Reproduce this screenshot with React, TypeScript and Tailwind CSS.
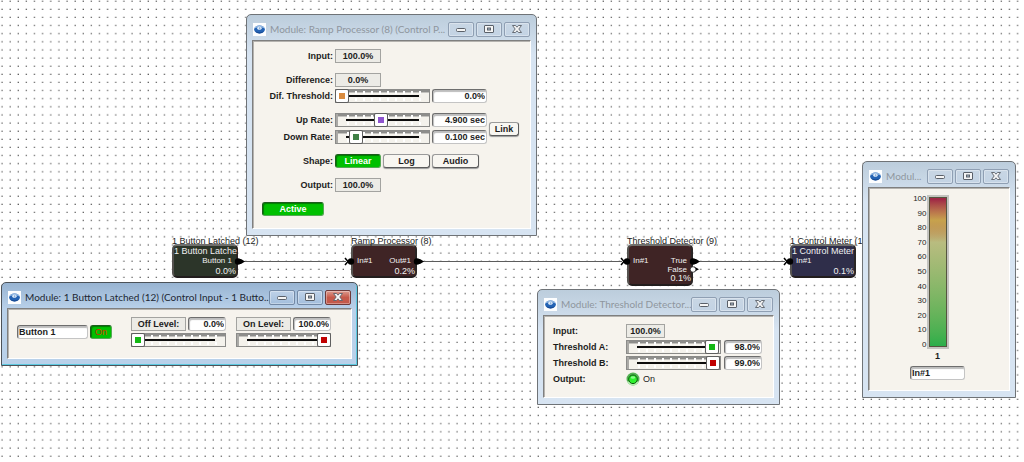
import type { ReactNode } from "react";
import clsx from "clsx";

type WindowProps = {
  title: string;
  active?: boolean;
  className: string;
  children: ReactNode;
};

type NodeProps = {
  name: string;
  className: string;
  children: ReactNode;
};

const BOX = "h-[14px] border border-[#a3a3a0] bg-[#ecebe6] leading-[13px] text-center";
const FIELD =
  "h-[14px] min-w-0 rounded-[3px] border border-[#c4c4c4] border-t-[#6e6e6e] border-l-[#6e6e6e] bg-white px-px text-right font-bold shadow-[inset_1px_2px_1px_#bdbdbd] outline-none";
const BUTTON =
  "h-[14px] rounded-[3px] border border-[#9a9a9a] border-r-[#5c5c5c] border-b-[#5c5c5c] bg-[#f8f6f1] text-center font-bold leading-[12px] shadow-[0_1px_1px_#999]";
const BUTTON_ON =
  "h-[14px] rounded-[3px] border border-[#55a855] border-t-[#1c5c1c] border-l-[#1c5c1c] bg-[#00c000] text-center font-bold leading-[12px] shadow-[inset_1px_1px_1px_#007a00]";

const TICKS = [11, 19, 27, 35, 43, 51, 59, 67, 75, 83];
const SCALE = [100, 90, 80, 70, 60, 50, 40, 30, 20, 10, 0];

function AppIcon() {
  return (
    <svg viewBox="0 0 13 13" className="size-[13px] shrink-0" aria-hidden="true">
      <rect width="13" height="13" fill="#fdfeff" />
      <ellipse cx="6.5" cy="6.5" rx="5.4" ry="3.9" fill="#2463b4" />
      <path d="M1.3 5.4a5.4 3.9 0 0 1 10.4 0q-1.2-1-5.2-1t-5.2 1z" fill="#8fb6e2" />
      <ellipse cx="6.4" cy="5.3" rx="2.2" ry="1.8" fill="#dbe8f6" />
      <path d="M6.2 4.2h1v2.4h-1z" fill="#7aa5d8" />
      <path d="M2 8.3q4.5 1.8 9 0-1.500 2.200-4.500 2.200T2 8.300z" fill="#174a94" />
    </svg>
  );
}

function CaptionButton({ kind, active }: { kind: "Minimize" | "Maximize" | "Close"; active?: boolean }) {
  return (
    <button
      type="button"
      aria-label={kind}
      className={clsx(
        "flex h-[15px] w-[26px] items-center justify-center rounded-[2px] border shadow-[inset_0_0_0_1px_#ffffff55]",
        active && kind === "Close"
          ? "border-[#6d3a3a] bg-linear-to-b from-[#dc9a8e] via-[#c6594a] to-[#c25a4c]"
          : active
            ? "border-[#7389a5] bg-linear-to-b from-[#bfd2e8] to-[#a3bedc]"
            : "border-[#8f9fb3] bg-linear-to-b from-[#c8d6e4] to-[#c3d3e4]",
      )}
    >
      <svg viewBox="0 0 12 10" className="h-[10px] w-[12px]" fill="#f5f5f5" stroke="#5a6069">
        {kind === "Minimize" && <rect x="1.5" y="4.5" width="9" height="3" rx="1" />}
        {kind === "Maximize" && (
          <>
            <rect x="1.5" y="1.5" width="9" height="7" rx="0.5" />
            <rect x="4.5" y="4" width="3" height="2" fill="#a9bacb" />
          </>
        )}
        {kind === "Close" && (
          <path
            d="M1.5 1.5h3L6 3.2l1.5-1.7h3L7.8 5l2.7 3.5h-3L6 6.8 4.500 8.500h-3L4.200 5z"
            strokeWidth="0.9"
          />
        )}
      </svg>
    </button>
  );
}

function ModuleWindow({ title, active, className, children }: WindowProps) {
  return (
    <section
      className={clsx(
        "absolute flex flex-col rounded-t-[5px] border px-[5px] pb-[6px] text-[9px] font-bold text-[#1c1c1c]",
        active
          ? "border-[#4c5258] bg-linear-to-b from-[#98b4d2] to-[#b9d1ea] to-[26px] shadow-[inset_-1px_-1px_0_#5cc9e0]"
          : "border-[#6f7377] bg-linear-to-b from-[#bccddc] to-[#d7e4f2] to-[40px]",
        className,
      )}
    >
      <header className="flex h-[25px] shrink-0 items-center gap-[4px] pt-[3px] pr-px pl-px">
        <AppIcon />
        <h2
          className={clsx(
            "min-w-0 flex-1 font-[Lato,sans-serif] text-[10px] font-normal whitespace-nowrap",
            active ? "text-[#1d2733]" : "text-[#8f969e]",
          )}
        >
          {title}
        </h2>
        <div className="flex gap-[2px]">
          <CaptionButton kind="Minimize" active={active} />
          <CaptionButton kind="Maximize" active={active} />
          <CaptionButton kind="Close" active={active} />
        </div>
      </header>
      <div className="flex-1 border border-t-[#7f7f7f] border-r-white border-b-white border-l-[#7f7f7f] bg-[#f6f3ed] shadow-[inset_1px_1px_0_#b5b3af]">
        {children}
      </div>
    </section>
  );
}

function Slider({ label, value, tone }: { label: string; value: number; tone: string }) {
  return (
    <div className="grid h-[14px] w-[95px] shrink-0 border border-[#8b8b89] bg-[#f4f2ec] *:[grid-area:1/1]">
      <svg viewBox="0 0 93 12" className="h-[12px] w-[93px]" aria-hidden="true">
        <path d="M0 0h93v2H0z" fill="#8d8d8b" />
        <path d="M0 2h93v1H0z" fill="#c3c2be" />
        <path d="M0 0h2v12H0z" fill="#aaa9a6" />
        {TICKS.map((x) => (
          <path key={x} d={`M${x} 1h2v3h-2zM${x} 8h2v3h-2z`} fill="#fff" />
        ))}
        <path d="M10 5h73v2H10z" fill="#0c0c0c" />
      </svg>
      <input
        type="range"
        aria-label={label}
        defaultValue={value}
        className={clsx(
          "h-[12px] w-[93px] appearance-none bg-transparent [&::-webkit-slider-thumb]:size-[12px] [&::-webkit-slider-thumb]:appearance-none [&::-webkit-slider-thumb]:rounded-[1px] [&::-webkit-slider-thumb]:border-3 [&::-webkit-slider-thumb]:border-white [&::-webkit-slider-thumb]:bg-current [&::-webkit-slider-thumb]:shadow-[0_0_0_1px_#5f5f5f]",
          tone,
        )}
      />
    </div>
  );
}

function Row({ label, children }: { label: string; children: ReactNode }) {
  return (
    <div className="flex h-[14px] items-center gap-[2px]">
      <span className="w-[80px] shrink-0 text-right leading-[14px]">{label}</span>
      {children}
    </div>
  );
}

function RampWindow() {
  return (
    <ModuleWindow
      title="Module: Ramp Processor (8) (Control P..."
      className="top-[14px] left-[246px] w-[291px]"
    >
      <div className="flex flex-col gap-[10px] pt-[8px] pb-[12px]">
        <Row label="Input:">
          <output className={`${BOX} w-[46px]`}>100.0%</output>
        </Row>
        <div className="flex flex-col gap-[2px]">
          <Row label="Difference:">
            <output className={`${BOX} w-[46px]`}>0.0%</output>
          </Row>
          <Row label="Dif. Threshold:">
            <Slider label="Dif. Threshold" value={0} tone="text-[#d98b3f]" />
            <input aria-label="Dif. Threshold value" defaultValue="0.0%" className={`${FIELD} w-[55px]`} />
          </Row>
        </div>
        <div className="flex items-center gap-[2px]">
          <div className="flex flex-col gap-[3px]">
            <Row label="Up Rate:">
              <Slider label="Up Rate" value={48} tone="text-[#8f55cf]" />
              <input aria-label="Up Rate value" defaultValue="4.900 sec" className={`${FIELD} w-[55px]`} />
            </Row>
            <Row label="Down Rate:">
              <Slider label="Down Rate" value={17} tone="text-[#3f8046]" />
              <input aria-label="Down Rate value" defaultValue="0.100 sec" className={`${FIELD} w-[55px]`} />
            </Row>
          </div>
          <button type="button" className={`${BUTTON} w-[30px]`}>
            Link
          </button>
        </div>
        <Row label="Shape:">
          <button type="button" aria-pressed="true" className={`${BUTTON_ON} w-[46px] text-white`}>
            Linear
          </button>
          <button type="button" className={`${BUTTON} w-[47px]`}>
            Log
          </button>
          <button type="button" className={`${BUTTON} w-[47px]`}>
            Audio
          </button>
        </Row>
        <Row label="Output:">
          <output className={`${BOX} w-[46px]`}>100.0%</output>
        </Row>
        <button type="button" aria-pressed="true" className={`${BUTTON_ON} ml-[9px] w-[62px] text-white`}>
          Active
        </button>
      </div>
    </ModuleWindow>
  );
}

function Level({ label, value, children }: { label: string; value: string; children: ReactNode }) {
  return (
    <div className="flex w-[95px] flex-col gap-[2px]">
      <div className="flex gap-[2px]">
        <span className={`${BOX} w-[55px]`}>{label}</span>
        <input aria-label={label} defaultValue={value} className={`${FIELD} w-[38px]`} />
      </div>
      {children}
    </div>
  );
}

function ButtonWindow() {
  return (
    <ModuleWindow
      active
      title="Module: 1 Button Latched (12) (Control Input - 1 Butto..."
      className="top-[282px] left-px w-[357px]"
    >
      <div className="flex items-center pt-[8px] pb-[11px] pl-[9px]">
        <input
          aria-label="Button name"
          defaultValue="Button 1"
          className={`${FIELD} w-[71px] text-left!`}
        />
        <button
          type="button"
          aria-pressed="true"
          className={`${BUTTON_ON} mr-[19px] ml-[2px] w-[22px] font-normal! text-[#d42a00]`}
        >
          On
        </button>
        <div className="flex gap-[10px]">
          <Level label="Off Level:" value="0.0%">
            <Slider label="Off Level slider" value={0} tone="text-[#14b814]" />
          </Level>
          <Level label="On Level:" value="100.0%">
            <Slider label="On Level slider" value={100} tone="text-[#c00000]" />
          </Level>
        </div>
      </div>
    </ModuleWindow>
  );
}

function ThresholdWindow() {
  return (
    <ModuleWindow title="Module: Threshold Detector..." className="top-[289px] left-[537px] w-[243px]">
      <div className="grid grid-cols-[71px_1fr] gap-[2px] pt-[8px] pb-[11px] pl-[9px] leading-[14px]">
        <span>Input:</span>
        <output className={`${BOX} w-[39px]`}>100.0%</output>
        <span>Threshold A:</span>
        <div className="flex gap-[3px]">
          <Slider label="Threshold A" value={98} tone="text-[#14b814]" />
          <input aria-label="Threshold A value" defaultValue="98.0%" className={`${FIELD} w-[38px]`} />
        </div>
        <span>Threshold B:</span>
        <div className="flex gap-[3px]">
          <Slider label="Threshold B" value={99} tone="text-[#c00000]" />
          <input aria-label="Threshold B value" defaultValue="99.0%" className={`${FIELD} w-[38px]`} />
        </div>
        <span>Output:</span>
        <div className="flex items-center gap-[3px] font-normal">
          <svg viewBox="0 0 14 14" className="size-[14px]" aria-hidden="true">
            <circle cx="7" cy="7" r="6.5" fill="#53b053" />
            <path d="M1 9.5a6.5 6.5 0 0 0 12 0z" fill="#b5ecb0" />
            <circle cx="7" cy="7.3" r="4.3" fill="#2df02d" stroke="#0b5a0b" />
            <ellipse cx="7" cy="5.5" rx="2.2" ry="1.2" fill="#8dfa8d" />
          </svg>
          On
        </div>
      </div>
    </ModuleWindow>
  );
}

function MeterWindow() {
  return (
    <ModuleWindow title="Modul..." className="top-[161px] left-[862px] w-[154px]">
      <div className="flex flex-col items-center pt-[7px] pb-[10px]">
        <div className="mr-[19px] flex">
          <div className="flex w-[16px] flex-col justify-between text-right text-[8px] leading-[8px] font-normal">
            {SCALE.map((n) => (
              <span key={n}>{n}</span>
            ))}
          </div>
          <div className="h-[154px] w-[22px] border-2 border-[#c4c3bf] bg-linear-to-b from-[#9c2440] via-[#b9bc80] via-30% to-[#27ae49]">
            <div className="h-full border border-[#55553f] bg-linear-to-b from-[#a02845] from-1% via-[#c7a24c] via-15% to-transparent to-30%" />
          </div>
        </div>
        <label htmlFor="meter-name" className="mr-[3px] leading-[15px]">
          1
        </label>
        <input
          id="meter-name"
          defaultValue="In#1"
          className={`${FIELD} mt-[2px] mr-[3px] w-[55px] text-left!`}
        />
      </div>
    </ModuleWindow>
  );
}

function ModuleNode({ name, className, children }: NodeProps) {
  return (
    <div className={clsx("absolute top-[236px] w-[66px] text-[9px]", className)}>
      <div className="h-[8px] leading-[10px] whitespace-nowrap text-[#222]">{name}</div>
      {children}
    </div>
  );
}

const NODE_BODY =
  "flex flex-col rounded-[5px] border-2 border-t-[#6f6f6c] border-l-[#55524f] border-r-[#2a2626] border-b-[#221d1d] text-right leading-[10px] whitespace-nowrap text-[#f0f0f0]";

function Wires() {
  return (
    <svg className="absolute top-[250px] left-0 h-[30px] w-full" aria-hidden="true">
      <path d="M244 11.5h102M421 11.5h201M697 11.5h88" stroke="#5c5c5c" />
      {[346, 622, 785].map((x) => (
        <g key={x}>
          <path d={`M${x - 1} 8l3 3.5-3 3.5`} fill="none" stroke="#000" strokeWidth="1.5" />
          <circle cx={x + 5} cy="11.5" r="3.2" />
        </g>
      ))}
      {[238, 417, 693].map((x) => (
        <g key={x}>
          <circle cx={x} cy="11.5" r="3.2" />
          <path d={`M${x} 9h3l4 2.5-4 2.5h-3z`} />
        </g>
      ))}
      <path d="M694 16.5l5 2.7-5 2.8z" />
      <circle cx="693" cy="19.5" r="2.8" fill="#fff" stroke="#222" strokeWidth="0.8" />
    </svg>
  );
}

export default function App() {
  return (
    <main className="relative min-h-screen overflow-hidden bg-white font-['Liberation_Sans',Arial,sans-serif]">
      <svg className="absolute size-full" aria-hidden="true">
        <defs>
          <pattern id="grid" width="8.125" height="8.125" patternUnits="userSpaceOnUse">
            <rect x="1.5" y="0.65" width="1" height="1" />
          </pattern>
        </defs>
        <rect width="100%" height="100%" fill="url(#grid)" />
      </svg>

      <ModuleNode name="1 Button Latched (12)" className="left-[172px]">
        <div className={`${NODE_BODY} h-[34px] bg-[#2c3529]`}>
          <span className="text-left">1 Button Latche</span>
          <span className="pr-[4px] text-[8px]">Button 1</span>
          <span>0.0%</span>
        </div>
      </ModuleNode>
      <ModuleNode name="Ramp Processor (8)" className="left-[351px]">
        <div className={`${NODE_BODY} h-[34px] bg-[#3f2425] pt-[10px]`}>
          <span className="flex justify-between px-[4px] text-[8px]">
            <span>In#1</span>
            <span>Out#1</span>
          </span>
          <span>0.2%</span>
        </div>
      </ModuleNode>
      <ModuleNode name="Threshold Detector (9)" className="left-[627px]">
        <div className={`${NODE_BODY} h-[42px] bg-[#3f2425] pt-[10px]`}>
          <span className="flex justify-between px-[4px] text-[8px]">
            <span>In#1</span>
            <span>True</span>
          </span>
          <span className="pr-[4px] text-[8px] leading-[7px]">False</span>
          <span>0.1%</span>
        </div>
      </ModuleNode>
      <ModuleNode name="1 Control Meter (11)" className="left-[790px]">
        <div className={`${NODE_BODY} h-[34px] bg-[#2f2e4a]`}>
          <span className="text-left">1 Control Meter</span>
          <span className="pl-[4px] text-left text-[8px]">In#1</span>
          <span>0.1%</span>
        </div>
      </ModuleNode>
      <Wires />

      <RampWindow />
      <ButtonWindow />
      <ThresholdWindow />
      <MeterWindow />
    </main>
  );
}
